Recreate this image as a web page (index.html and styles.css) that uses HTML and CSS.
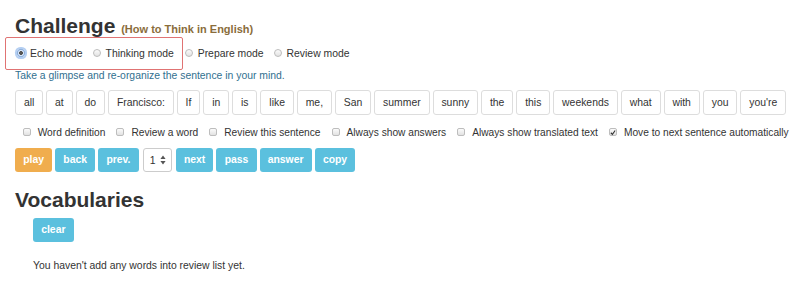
FILE: index.html
```html
<!DOCTYPE html>
<html>
<head>
<meta charset="utf-8">
<link rel="stylesheet" href="styles.css">
</head>
<body>
<div class="page">
  <h1 class="title">Challenge <small class="sub">(How to Think in English)</small></h1>
  <div class="modes">
    <div class="modebox">
      <label class="radio"><span class="rdot on"></span>Echo mode</label>
      <label class="radio"><span class="rdot"></span>Thinking mode</label>
    </div>
    <label class="radio"><span class="rdot"></span>Prepare mode</label>
    <label class="radio"><span class="rdot"></span>Review mode</label>
  </div>
  <p class="hint">Take a glimpse and re-organize the sentence in your mind.</p>
  <div class="words">
    <span class="word">all</span><span class="word">at</span><span class="word">do</span><span class="word">Francisco:</span><span class="word">If</span><span class="word">in</span><span class="word">is</span><span class="word">like</span><span class="word">me,</span><span class="word">San</span><span class="word">summer</span><span class="word">sunny</span><span class="word">the</span><span class="word">this</span><span class="word">weekends</span><span class="word">what</span><span class="word">with</span><span class="word">you</span><span class="word">you're</span>
  </div>
  <div class="opts">
    <label class="chk"><span class="cbox"></span>Word definition</label>
    <label class="chk"><span class="cbox"></span>Review a word</label>
    <label class="chk"><span class="cbox"></span>Review this sentence</label>
    <label class="chk"><span class="cbox"></span>Always show answers</label>
    <label class="chk"><span class="cbox"></span>Always show translated text</label>
    <label class="chk"><span class="cbox"><svg width="7" height="7" viewBox="0 0 7 7"><path d="M1 3.8 L2.8 5.6 L6 1.2" fill="none" stroke="#333" stroke-width="1.3"/></svg></span>Move to next sentence automatically</label>
  </div>
  <div class="actions">
    <span class="btn warn">play</span><span class="btn info">back</span><span class="btn info">prev.</span><span class="sel">1<svg class="arrows" width="6" height="10" viewBox="0 0 6 10"><path d="M3 0.5 L5.6 4 H0.4 Z M3 9.5 L5.6 6 H0.4 Z" fill="#555"/></svg></span><span class="btn info">next</span><span class="btn info">pass</span><span class="btn info">answer</span><span class="btn info">copy</span>
  </div>
  <h1 class="title vocab">Vocabularies</h1>
  <div class="vocabbody">
    <span class="btn info">clear</span>
    <p class="empty">You haven't add any words into review list yet.</p>
  </div>
</div>
</body>
</html>
```
FILE: styles.css
```css
* { box-sizing: border-box; }
body {
  margin: 0;
  background: #fff;
  font-family: "Liberation Sans", Arial, sans-serif;
  font-size: 10.4px;
  color: #333;
}
.page {
  padding: 10px 15px 0 15px;
}
.title {
  margin: 0;
  height: 32px;
  font-size: 21px;
  font-weight: 700;
  line-height: 32px;
  color: #333;
}
.sub {
  font-size: 11px;
  line-height: 1;
  color: #8a6d3b;
  font-weight: 700;
}
.modes {
  display: flex;
  align-items: center;
  height: 22px;
  margin-left: -10px;
}
.modebox {
  display: flex;
  align-items: center;
  border: 1.5px solid #e07373;
  border-radius: 2px;
  height: 33px;
  padding: 0 8px 0 11px;
  margin-right: 2px;
}
.radio {
  display: flex;
  align-items: center;
  margin-right: 10px;
  white-space: nowrap;
}
.modebox .radio:last-child { margin-right: 0; }
.rdot {
  width: 8px;
  height: 8px;
  border-radius: 50%;
  border: 1px solid #bdbdbd;
  background: linear-gradient(#fbfbfb, #e2e2e2);
  margin-right: 5px;
  display: inline-block;
  flex: none;
}
.rdot.on {
  border-color: #7aa2d6;
  background: radial-gradient(circle, #555 0 1.6px, #d7e5f8 2.2px);
  box-shadow: 0 0 0 2px #b5cff2;
  border-radius: 40%;
}
.hint {
  margin: 5px 0 0 0;
  color: #31708f;
  line-height: 14px;
}
.words {
  display: flex;
  gap: 3px;
  margin-top: 7px;
}
.word {
  border: 1px solid #ddd;
  border-radius: 3px;
  height: 25px;
  line-height: 23px;
  padding: 0 7.9px;
  background: #fff;
  white-space: nowrap;
}
.opts {
  display: flex;
  margin-top: 9px;
  padding-left: 7.7px;
  height: 16px;
  align-items: center;
  font-size: 10.2px;
}
.chk {
  display: flex;
  align-items: center;
  margin-right: 11px;
  white-space: nowrap;
}
.chk:last-child { margin-right: 0; }
.cbox {
  width: 8px;
  height: 8px;
  border: 1px solid #bdbdbd;
  border-radius: 2px;
  background: linear-gradient(#fbfbfb, #e2e2e2);
  margin-right: 7px;
  display: inline-flex;
  align-items: center;
  justify-content: center;
  flex: none;
}
.actions {
  display: flex;
  gap: 3px;
  margin-top: 8px;
}
.btn {
  display: inline-block;
  height: 24px;
  line-height: 24px;
  padding: 0 8.2px;
  border-radius: 3px;
  color: #fff;
  font-weight: 700;
  white-space: nowrap;
}
.warn { background: #f0ad4e; }
.info { background: #5bc0de; }
.sel {
  display: inline-flex;
  align-items: center;
  justify-content: space-between;
  width: 29px;
  height: 24px;
  border: 1px solid #ccc;
  border-radius: 3px;
  padding: 0 5px 0 6px;
  background: #fff;
  margin: 0 1px;
}
.vocab {
  margin-top: 12px;
}
.vocabbody {
  padding-left: 18px;
  padding-top: 2px;
}
.empty {
  margin: 17px 0 0 0;
  line-height: 14px;
}
```
